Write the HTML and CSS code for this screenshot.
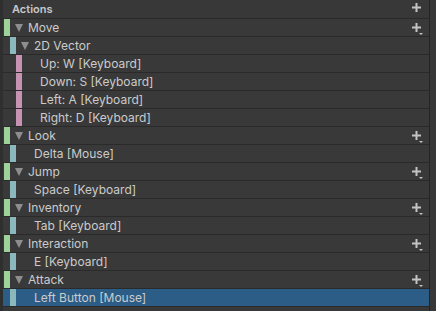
FILE: index.html
```html
<!DOCTYPE html>
<html lang="en">

<head>
    <meta charset="UTF-8">
    <title>Actions</title>
    <link rel="stylesheet" href="styles.css">
</head>

<body>
    <div class="panel">
        <div class="tree">
            <div class="header">
                <span class="title">Actions</span>
                <span class="add">
                    <svg width="9" height="9" viewBox="0 0 9 9"><path d="M3.5 0h2v3.5H9v2H5.5V9h-2V5.5H0v-2h3.5z" fill="#c4c4c4"/></svg>
                </span>
            </div>

            <div class="row">
                <span class="bar action lvl0"></span>
                <span class="twist"><i class="tri"></i></span>
                <span class="label">Move</span>
                <span class="add menu">
                    <svg width="12" height="12" viewBox="0 0 12 12"><path d="M3.5 0h2v3.5H9v2H5.5V9h-2V5.5H0v-2h3.5z" fill="#c4c4c4"/><path d="M7 10h4l-2 2z" fill="#c4c4c4"/></svg>
                </span>
            </div>
            <div class="row">
                <span class="bar binding lvl1"></span>
                <span class="twist"><i class="tri"></i></span>
                <span class="label">2D Vector</span>
            </div>
            <div class="row">
                <span class="bar part lvl2"></span>
                <span class="twist"></span>
                <span class="label">Up: W [Keyboard]</span>
            </div>
            <div class="row">
                <span class="bar part lvl2"></span>
                <span class="twist"></span>
                <span class="label">Down: S [Keyboard]</span>
            </div>
            <div class="row">
                <span class="bar part lvl2"></span>
                <span class="twist"></span>
                <span class="label">Left: A [Keyboard]</span>
            </div>
            <div class="row">
                <span class="bar part lvl2"></span>
                <span class="twist"></span>
                <span class="label">Right: D [Keyboard]</span>
            </div>

            <div class="row">
                <span class="bar action lvl0"></span>
                <span class="twist"><i class="tri"></i></span>
                <span class="label">Look</span>
                <span class="add menu">
                    <svg width="12" height="12" viewBox="0 0 12 12"><path d="M3.5 0h2v3.5H9v2H5.5V9h-2V5.5H0v-2h3.5z" fill="#c4c4c4"/><path d="M7 10h4l-2 2z" fill="#c4c4c4"/></svg>
                </span>
            </div>
            <div class="row">
                <span class="bar binding lvl1"></span>
                <span class="twist"></span>
                <span class="label">Delta [Mouse]</span>
            </div>

            <div class="row">
                <span class="bar action lvl0"></span>
                <span class="twist"><i class="tri"></i></span>
                <span class="label">Jump</span>
                <span class="add menu">
                    <svg width="12" height="12" viewBox="0 0 12 12"><path d="M3.5 0h2v3.5H9v2H5.5V9h-2V5.5H0v-2h3.5z" fill="#c4c4c4"/><path d="M7 10h4l-2 2z" fill="#c4c4c4"/></svg>
                </span>
            </div>
            <div class="row">
                <span class="bar binding lvl1"></span>
                <span class="twist"></span>
                <span class="label">Space [Keyboard]</span>
            </div>

            <div class="row">
                <span class="bar action lvl0"></span>
                <span class="twist"><i class="tri"></i></span>
                <span class="label">Inventory</span>
                <span class="add menu">
                    <svg width="12" height="12" viewBox="0 0 12 12"><path d="M3.5 0h2v3.5H9v2H5.5V9h-2V5.5H0v-2h3.5z" fill="#c4c4c4"/><path d="M7 10h4l-2 2z" fill="#c4c4c4"/></svg>
                </span>
            </div>
            <div class="row">
                <span class="bar binding lvl1"></span>
                <span class="twist"></span>
                <span class="label">Tab [Keyboard]</span>
            </div>

            <div class="row">
                <span class="bar action lvl0"></span>
                <span class="twist"><i class="tri"></i></span>
                <span class="label">Interaction</span>
                <span class="add menu">
                    <svg width="12" height="12" viewBox="0 0 12 12"><path d="M3.5 0h2v3.5H9v2H5.5V9h-2V5.5H0v-2h3.5z" fill="#c4c4c4"/><path d="M7 10h4l-2 2z" fill="#c4c4c4"/></svg>
                </span>
            </div>
            <div class="row">
                <span class="bar binding lvl1"></span>
                <span class="twist"></span>
                <span class="label">E [Keyboard]</span>
            </div>

            <div class="row">
                <span class="bar action lvl0"></span>
                <span class="twist"><i class="tri"></i></span>
                <span class="label">Attack</span>
                <span class="add menu">
                    <svg width="12" height="12" viewBox="0 0 12 12"><path d="M3.5 0h2v3.5H9v2H5.5V9h-2V5.5H0v-2h3.5z" fill="#c4c4c4"/><path d="M7 10h4l-2 2z" fill="#c4c4c4"/></svg>
                </span>
            </div>
            <div class="row selected">
                <span class="bar binding lvl1"></span>
                <span class="twist"></span>
                <span class="label">Left Button [Mouse]</span>
            </div>
        </div>
        <div class="edge"></div>
    </div>
</body>

</html>
```

FILE: styles.css
```css
body {
    margin: 0;
    background-color: #383838;
    font-family: Inter, "Noto Sans", sans-serif;
    color: #cbcbcb;
}

.panel {
    display: flex;
    width: 436px;
    height: 311px;
    background-color: #383838;
}

.tree {
    width: 426px;
    flex-shrink: 0;
    border-left: 3px solid #2f2f2f;
    display: flex;
    flex-direction: column;
}

.edge {
    width: 1px;
    background-color: #242424;
}

.header {
    height: 18px;
    border-bottom: 1px solid #2a2a2a;
    display: flex;
    align-items: center;
    padding-left: 9px;
}

.title {
    font-size: 11px;
    font-weight: 600;
    color: #c8c8c8;
    flex: 1;
}

.add {
    width: 16px;
    display: flex;
    margin-right: 1px;
    margin-bottom: 3px;
}

.add.menu {
    margin-bottom: 0;
    margin-top: 3px;
}

.row {
    height: 17px;
    border-bottom: 1px solid #2a2a2a;
    display: flex;
    align-items: center;
    font-size: 12px;
    background-color: #393939;
}

.row.selected {
    background-color: #2c5d87;
}

.bar {
    width: 6px;
    height: 17px;
    flex-shrink: 0;
}

.lvl0 {
    margin-left: 1px;
}

.lvl1 {
    margin-left: 7px;
}

.lvl2 {
    margin-left: 13px;
}

.action {
    background-color: #9fd29a;
}

.binding {
    background-color: #8bb8bc;
}

.part {
    background-color: #c793b3;
}

.twist {
    width: 18px;
    flex-shrink: 0;
    display: flex;
    align-items: center;
}

.tri {
    margin-left: 5px;
    margin-top: 1px;
    width: 0;
    height: 0;
    border-left: 4.5px solid transparent;
    border-right: 4.5px solid transparent;
    border-top: 8px solid #8e8e8e;
}

.label {
    flex: 1;
    white-space: nowrap;
}
```
